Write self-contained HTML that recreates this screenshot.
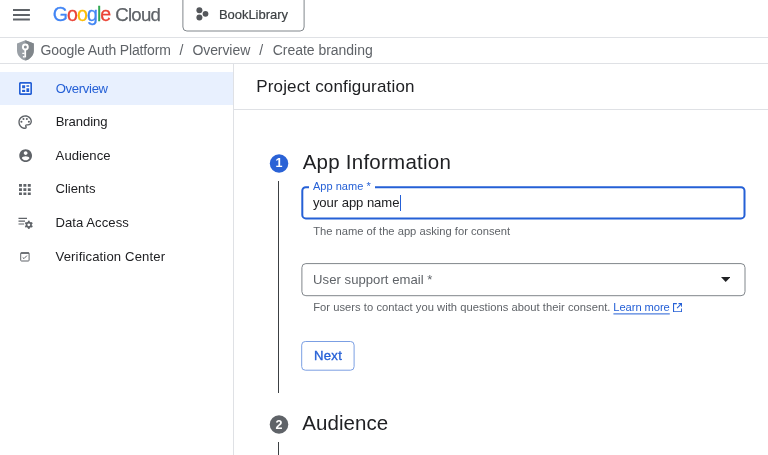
<!DOCTYPE html>
<html lang="en">
<head>
<meta charset="utf-8">
<title>Create branding – Google Auth Platform – BookLibrary – Google Cloud console</title>
<style>
html,body{margin:0;padding:0;}
body{width:768px;height:455px;overflow:hidden;background:#fff;font-family:"Liberation Sans",Arial,sans-serif;color:#202124;position:relative;}
.abs{position:absolute;}
.t{position:absolute;white-space:pre;line-height:1;}
.ln{position:absolute;background:#dfe1e5;}
</style>
</head>
<body>
<div id="page" style="position:absolute;left:0;top:0;width:768px;height:455px;overflow:hidden;will-change:transform;">
<!-- structure lines -->
<div class="ln" style="left:0;top:37px;width:768px;height:1px;"></div>
<div class="ln" style="left:0;top:63px;width:768px;height:1px;"></div>
<div class="ln" style="left:233px;top:64px;width:1px;height:391px;"></div>
<div class="ln" style="left:234px;top:109px;width:534px;height:1px;"></div>
<svg class="abs" style="left:0;top:0" width="768" height="455" viewBox="0 0 768 455" fill="none">
<rect x="182.900" y="-5" width="121.200" height="36" rx="4" stroke="#80868b" stroke-width="1"/>
<rect x="302.300" y="187.300" width="442.200" height="31.100" rx="3.500" stroke="#2560d6" stroke-width="2"/>
<rect x="301.900" y="263.600" width="443.100" height="32.100" rx="4" stroke="#80868b" stroke-width="1"/>
<circle cx="279.050" cy="163.500" r="9.250" fill="#2a62d6"/>
<circle cx="279" cy="424.500" r="9.300" fill="#5f6368"/>
<rect x="613.400" y="313.400" width="56.400" height="1" fill="#2560d6"/>
<rect x="301.700" y="341.500" width="52.400" height="28.700" rx="3.600" stroke="#7b9fe3" stroke-width="1"/>
</svg>
<!-- top bar -->
<svg class="abs" style="left:13px;top:8px" width="18" height="14" viewBox="0 0 18 14"><path d="M0 1.100h16.900v2H0zM0 5.900h16.900v2H0zM0 10.600h16.900v2H0z" fill="#5f6368"/></svg>
<svg class="abs" style="left:195px;top:6px" width="16" height="16" viewBox="0 0 16 16"><circle cx="4.400" cy="4.300" r="3" fill="#54575b"/><circle cx="4.400" cy="11.400" r="3" fill="#54575b"/><circle cx="10.500" cy="7.800" r="2.900" fill="#54575b"/></svg>
<!-- breadcrumb shield -->
<svg class="abs" style="left:16.900px;top:40px" width="17" height="21" viewBox="0 0 17 21"><path d="M8.400 0.200L16.800 3.400V10.500C16.800 15.300 13.200 19.300 8.400 20.600C3.600 19.300 0 15.300 0 10.500V3.400z" fill="#9aa0a6"/><path d="M8.400 0.200L16.800 3.400V10.500C16.800 15.300 13.200 19.300 8.400 20.600z" fill="#80868b"/><circle cx="8.350" cy="7" r="3.400" fill="#fff"/><circle cx="8.350" cy="6.900" r="1.500" fill="#8a8f95"/><path d="M7.400 9.800h1.700v7.600H7.400z" fill="#fff"/><path d="M5.300 12.800h2.300v1.300H5.300zM5.900 16h1.700v1.400H5.900z" fill="#fff"/></svg>
<!-- sidebar -->
<div class="abs" style="left:0;top:72px;width:233px;height:33px;background:#e8f0fe;"></div>
<svg class="abs" style="left:18.800px;top:81.900px" width="13" height="13" viewBox="0 0 13 13"><rect x="0.800" y="0.800" width="11.400" height="11.400" rx="0.900" fill="#fff" stroke="#2560d6" stroke-width="1.700"/><path d="M3.100 3.300h3.100v2.600H3.100zM3.100 8h3.100v2H3.100zM7.400 3.300h2.800v1.400H7.400zM7.400 6.200h2.800v3.800H7.400z" fill="#2560d6"/><path d="M3.100 6.200h3.100v1.400H3.100z" fill="#2560d6" opacity="0.350"/></svg>
<svg class="abs" style="left:16.940px;top:113.640px" width="16.320" height="16.320" viewBox="0 0 24 24" fill="#5f6368"><path d="M12 22C6.490 22 2 17.510 2 12S6.490 2 12 2s10 4.040 10 9c0 3.310-2.690 6-6 6h-1.770c-.28 0-.5.220-.5.500 0 .12.050.230.130.330.410.470.640 1.060.640 1.670A2.500 2.500 0 0 1 12 22zm0-18c-4.410 0-8 3.590-8 8s3.590 8 8 8c.28 0 .5-.22.500-.5a.54.54 0 0 0-.14-.35c-.41-.46-.63-1.050-.63-1.650a2.500 2.500 0 0 1 2.500-2.500H16c2.210 0 4-1.790 4-4 0-3.860-3.590-7-8-7z"/><circle cx="6.500" cy="11.500" r="1.500"/><circle cx="9.500" cy="7.500" r="1.500"/><circle cx="14.500" cy="7.500" r="1.500"/><circle cx="17.500" cy="11.500" r="1.500"/></svg>
<svg class="abs" style="left:17.550px;top:147.950px" width="15.300" height="15.300" viewBox="0 0 24 24" fill="#5f6368"><path d="M12 2C6.480 2 2 6.480 2 12s4.480 10 10 10 10-4.480 10-10S17.520 2 12 2zm0 3c1.660 0 3 1.340 3 3s-1.340 3-3 3-3-1.340-3-3 1.340-3 3-3zm0 14.200c-2.500 0-4.710-1.280-6-3.220.030-1.990 4-3.080 6-3.080 1.990 0 5.970 1.090 6 3.080-1.290 1.940-3.500 3.220-6 3.220z"/></svg>
<svg class="abs" style="left:19.300px;top:183.600px" width="11.750" height="11.250" viewBox="0 0 11.600 11.400" preserveAspectRatio="none" fill="#5f6368"><path d="M0 0h2.900v2.800H0zM4.350 0h2.900v2.800h-2.900zM8.700 0h2.900v2.800H8.700zM0 4.300h2.900v2.800H0zM4.350 4.300h2.900v2.800h-2.900zM8.700 4.300h2.900v2.800H8.700zM0 8.600h2.900v2.800H0zM4.350 8.600h2.900v2.800h-2.900zM8.700 8.600h2.900v2.800H8.700z"/></svg>
<svg class="abs" style="left:18px;top:216px" width="16" height="14" viewBox="0 0 16 14"><path d="M0.500 1.750h8.500v1.200H0.500zM0.500 4.600h6.500v1.200H0.500zM0.500 7.400h5.600v1.200H0.500z" fill="#5f6368"/><g transform="translate(10.800 8.800)"><circle r="2.250" fill="none" stroke="#5f6368" stroke-width="1.700"/><g fill="#5f6368"><rect x="-0.900" y="-4.100" width="1.800" height="1.600"/><rect x="-0.900" y="2.500" width="1.800" height="1.600"/><rect x="-0.900" y="-4.100" width="1.800" height="1.600" transform="rotate(60)"/><rect x="-0.900" y="2.500" width="1.800" height="1.600" transform="rotate(60)"/><rect x="-0.900" y="-4.100" width="1.800" height="1.600" transform="rotate(120)"/><rect x="-0.900" y="2.500" width="1.800" height="1.600" transform="rotate(120)"/></g></g></svg>
<svg class="abs" style="left:20.400px;top:251.700px" width="10" height="10" viewBox="0 0 10 10" fill="none" stroke="#5f6368"><rect x="0.700" y="0.800" width="8.400" height="8.200" rx="0.800" stroke-width="1"/><path d="M0.700 1.100h8.400" stroke-width="1.500"/><path d="M2.700 5.500l1.300 1.100 2.900-3" stroke-width="1"/></svg>
<!-- main -->
<div class="t" style="left:269.800px;top:157.300px;width:18.500px;text-align:center;font-size:12.500px;font-weight:bold;color:#fff;">1</div>
<div class="abs" style="left:278px;top:180.500px;width:1.200px;height:212.500px;background:#3c4043;"></div>
<div class="abs" style="left:309px;top:185px;width:66px;height:5px;background:#fff;"></div>
<div class="abs" style="left:399.700px;top:195.400px;width:1.200px;height:15.300px;background:#2560d6;"></div>
<svg class="abs" style="left:720.600px;top:277.200px" width="9.400" height="5" viewBox="0 0 9.400 5"><path d="M0 0h9.400L4.700 5z" fill="#202124"/></svg>
<svg class="abs" style="left:672.900px;top:302.900px" width="9.200" height="9.300" viewBox="0 0 10 10" fill="none" stroke="#2560d6" stroke-width="1.150"><path d="M4.200 0.600H0.600v8.800h8.800V5.800"/><path d="M6 0.600h3.400V4M9.400 0.600L4.400 5.600"/></svg>
<div class="t" style="left:269.800px;top:418.600px;width:18.500px;text-align:center;font-size:12.500px;font-weight:bold;color:#fff;">2</div>
<div class="abs" style="left:278px;top:442.200px;width:1.200px;height:13px;background:#3c4043;"></div>
<div class="t" style="left:52.70px;top:4.99px;font-size:19.5px;letter-spacing:-0.880px;color:#4285f4;-webkit-text-stroke:0.3px;"><span style="color:#4285f4">G</span><span style="color:#ea4335">o</span><span style="color:#fbbc05">o</span><span style="color:#4285f4">g</span><span style="color:#34a853">l</span><span style="color:#ea4335">e</span></div>
<div class="t" style="left:115.30px;top:5.56px;font-size:18.6px;letter-spacing:-0.750px;color:#5f6368;-webkit-text-stroke:0.25px;">Cloud</div>
<div class="t" style="left:218.90px;top:7.80px;font-size:13px;letter-spacing:-0.030px;color:#3c4043;-webkit-text-stroke:0.2px;">BookLibrary</div>
<div class="t" style="left:40.60px;top:43.15px;font-size:14px;letter-spacing:-0.147px;color:#5f6368;">Google Auth Platform</div>
<div class="t" style="left:179.40px;top:43.15px;font-size:14px;letter-spacing:0.000px;color:#5f6368;">/</div>
<div class="t" style="left:192.40px;top:43.15px;font-size:14px;letter-spacing:-0.071px;color:#5f6368;">Overview</div>
<div class="t" style="left:259.20px;top:43.15px;font-size:14px;letter-spacing:0.000px;color:#5f6368;">/</div>
<div class="t" style="left:272.80px;top:43.15px;font-size:14px;letter-spacing:-0.036px;color:#5f6368;">Create branding</div>
<div class="t" style="left:55.70px;top:81.51px;font-size:13.1px;letter-spacing:-0.314px;color:#2560d6;">Overview</div>
<div class="t" style="left:55.70px;top:115.11px;font-size:13.1px;letter-spacing:-0.086px;color:#202124;">Branding</div>
<div class="t" style="left:55.60px;top:148.71px;font-size:13.1px;letter-spacing:0.057px;color:#202124;">Audience</div>
<div class="t" style="left:55.50px;top:182.41px;font-size:13.1px;letter-spacing:0.000px;color:#202124;">Clients</div>
<div class="t" style="left:55.50px;top:215.91px;font-size:13.1px;letter-spacing:0.050px;color:#202124;">Data Access</div>
<div class="t" style="left:55.50px;top:249.61px;font-size:13.1px;letter-spacing:0.144px;color:#202124;">Verification Center</div>
<div class="t" style="left:256.20px;top:78.41px;font-size:17px;letter-spacing:0.165px;color:#202124;">Project configuration</div>
<div class="t" style="left:302.70px;top:152.05px;font-size:20.5px;letter-spacing:0.243px;color:#202124;">App Information</div>
<div class="t" style="left:312.90px;top:180.59px;font-size:11px;letter-spacing:0.044px;color:#2560d6;">App name *</div>
<div class="t" style="left:312.90px;top:195.91px;font-size:13.1px;letter-spacing:-0.067px;color:#202124;">your app name</div>
<div class="t" style="left:313.20px;top:225.52px;font-size:11.2px;letter-spacing:-0.005px;color:#5f6368;">The name of the app asking for consent</div>
<div class="t" style="left:313.10px;top:272.81px;font-size:13.1px;letter-spacing:0.037px;color:#5f6368;">User support email *</div>
<div class="t" style="left:313.20px;top:302.32px;font-size:11.2px;letter-spacing:0.031px;color:#5f6368;">For users to contact you with questions about their consent.</div>
<div class="t" style="left:613.30px;top:302.32px;font-size:11.2px;letter-spacing:-0.078px;color:#2560d6;">Learn more</div>
<div class="t" style="left:313.90px;top:349.01px;font-size:13.1px;letter-spacing:0.333px;color:#2560d6;-webkit-text-stroke:0.35px #2560d6;">Next</div>
<div class="t" style="left:302.30px;top:413.25px;font-size:20.5px;letter-spacing:0.043px;color:#202124;">Audience</div>
</div>
</body>
</html>
